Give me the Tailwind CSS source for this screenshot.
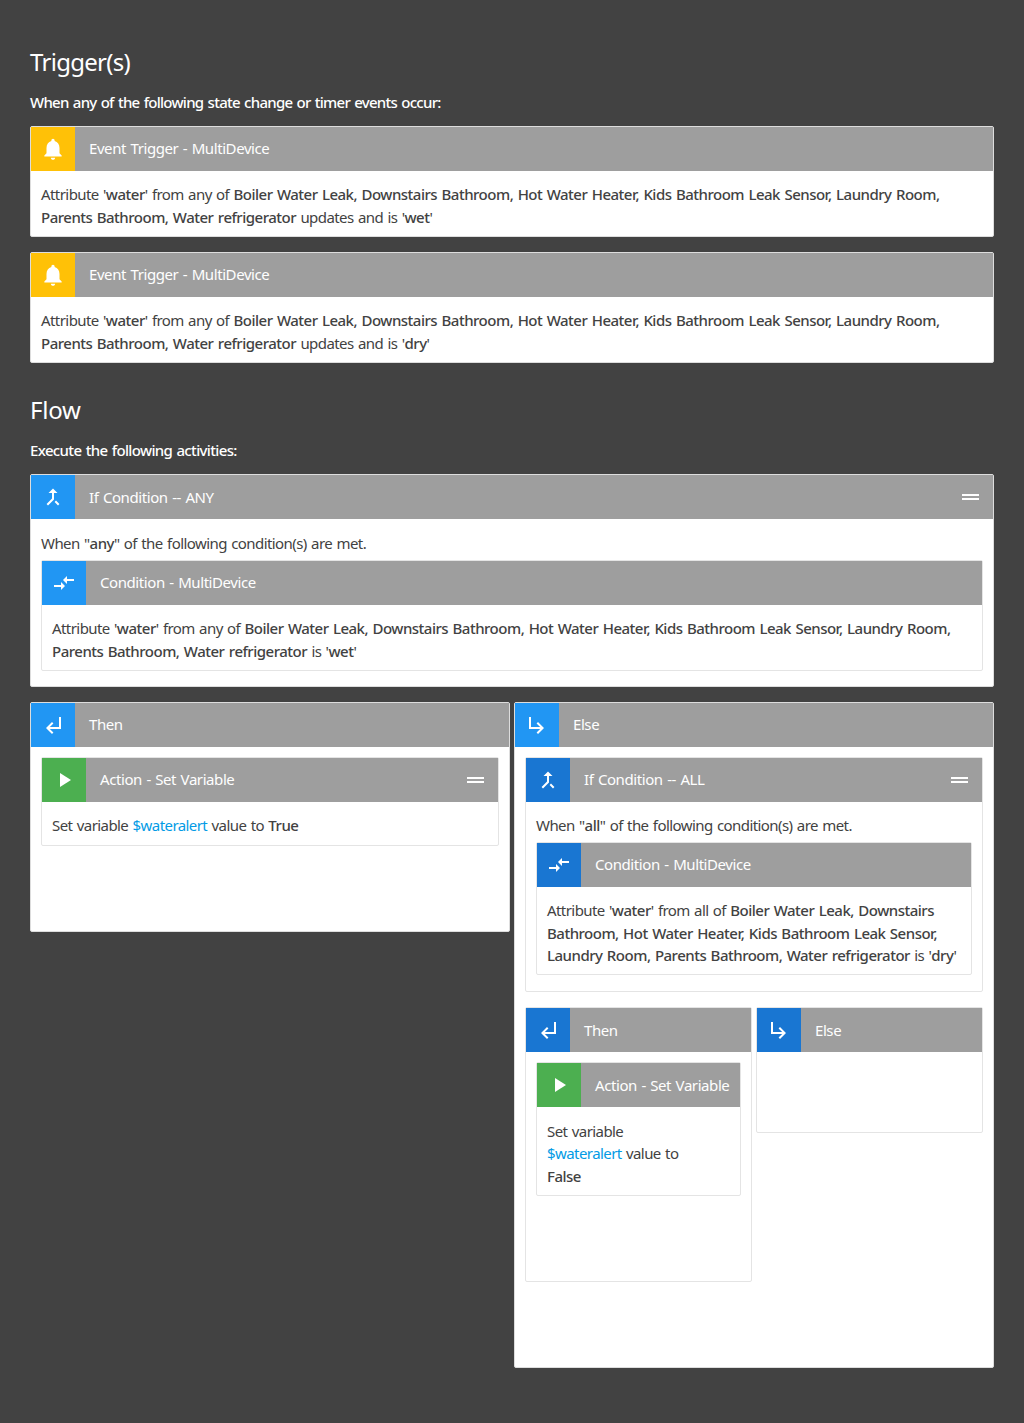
<!DOCTYPE html>
<html lang="en">
<head>
<meta charset="UTF-8">
<title>Flow</title>
<script src="https://cdn.jsdelivr.net/npm/@tailwindcss/browser@4"></script>
</head>
<body class="bg-[#424242] font-['Noto_Sans',sans-serif] text-[15px] leading-[22.5px] text-[#424242] tracking-[-0.57px] [word-spacing:1px] h-[1423px] overflow-hidden">
<div class="px-[30px] pt-[44px]">

  <!-- triggers -->
  <h2 class="text-[24px] leading-[36px] text-white tracking-[-0.7px]">Trigger(s)</h2>
  <p class="mt-[11px] mb-[12px] text-white font-medium tracking-[-0.73px]">When any of the following state change or timer events occur:</p>

  <div class="flex flex-col gap-[15px]">
    <div class="bg-white border border-[#ddd] rounded-[2px]">
      <div class="flex items-center h-[44px] bg-[#9e9e9e] text-white tracking-[-0.42px]">
        <div class="w-[44px] h-full flex items-center justify-center bg-[#ffc107]"><svg class="w-[26px] h-[26px] fill-white" viewBox="0 0 24 24"><path d="M12 22c1.1 0 2-.9 2-2h-4c0 1.1.9 2 2 2zm6-6v-5c0-3.07-1.63-5.64-4.5-6.32V4c0-.83-.67-1.5-1.5-1.5s-1.5.67-1.5 1.5v.68C7.64 5.36 6 7.92 6 11v5l-2 2v1h16v-1l-2-2z"/></svg></div>
        <span class="ml-[14px]">Event Trigger - MultiDevice</span>
      </div>
      <div class="pt-[12.5px] pb-[7.5px] px-[10px]">Attribute '<b class="font-medium tracking-[-0.5px]">water</b>' from any of <b class="font-medium tracking-[-0.5px]">Boiler Water Leak, Downstairs Bathroom, Hot Water Heater, Kids Bathroom Leak Sensor, Laundry Room, Parents Bathroom, Water refrigerator</b> updates and is '<b class="font-medium tracking-[-0.5px]">wet</b>'</div>
    </div>
    <div class="bg-white border border-[#ddd] rounded-[2px]">
      <div class="flex items-center h-[44px] bg-[#9e9e9e] text-white tracking-[-0.42px]">
        <div class="w-[44px] h-full flex items-center justify-center bg-[#ffc107]"><svg class="w-[26px] h-[26px] fill-white" viewBox="0 0 24 24"><path d="M12 22c1.1 0 2-.9 2-2h-4c0 1.1.9 2 2 2zm6-6v-5c0-3.07-1.63-5.64-4.5-6.32V4c0-.83-.67-1.5-1.5-1.5s-1.5.67-1.5 1.5v.68C7.64 5.36 6 7.92 6 11v5l-2 2v1h16v-1l-2-2z"/></svg></div>
        <span class="ml-[14px]">Event Trigger - MultiDevice</span>
      </div>
      <div class="pt-[12.5px] pb-[7.5px] px-[10px]">Attribute '<b class="font-medium tracking-[-0.5px]">water</b>' from any of <b class="font-medium tracking-[-0.5px]">Boiler Water Leak, Downstairs Bathroom, Hot Water Heater, Kids Bathroom Leak Sensor, Laundry Room, Parents Bathroom, Water refrigerator</b> updates and is '<b class="font-medium tracking-[-0.5px]">dry</b>'</div>
    </div>
  </div>

  <!-- flow -->
  <h2 class="mt-[29px] text-[24px] leading-[36px] text-white tracking-[-0.2px]">Flow</h2>
  <p class="mt-[11px] mb-[13px] text-white font-medium tracking-[-0.65px]">Execute the following activities:</p>

  <div class="bg-white border border-[#ddd] rounded-[2px]">
    <div class="flex items-center h-[44px] bg-[#9e9e9e] text-white tracking-[-0.42px]">
      <div class="w-[44px] h-full flex items-center justify-center bg-[#2196f3]"><svg class="w-[24px] h-[24px] fill-white" viewBox="0 0 24 24"><path d="M17 20.41L18.41 19 15 15.59 13.59 17 17 20.41zM7.5 8H11v5.59L5.59 19 7 20.41l6-6V8h3.5L12 3.5 7.5 8z"/></svg></div>
      <span class="ml-[14px]">If Condition -- ANY</span>
      <div class="ml-auto mr-[14px] w-[17px] flex flex-col gap-[2px]"><div class="h-[2px] bg-white"></div><div class="h-[2px] bg-white"></div></div>
    </div>
    <div class="pt-[13px] px-[10px] pb-[15px]">
      <div>When "<b class="font-medium tracking-[-0.5px]">any</b>" of the following condition(s) are met.</div>
      <div class="mt-[5px] bg-white border border-[#e4e4e4] rounded-[2px]">
        <div class="flex items-center h-[44px] bg-[#9e9e9e] text-white tracking-[-0.42px]">
          <div class="w-[44px] h-full flex items-center justify-center bg-[#2196f3]"><svg class="w-[24px] h-[24px] fill-white" viewBox="0 0 24 24"><path d="M9.01 14H2v2h7.01v3L13 15l-3.99-4v3zm5.98-1v-3H22V8h-7.01V5L11 9l3.99 4z"/></svg></div>
          <span class="ml-[14px]">Condition - MultiDevice</span>
        </div>
        <div class="pt-[12.5px] pb-[7.5px] px-[10px]">Attribute '<b class="font-medium tracking-[-0.5px]">water</b>' from any of <b class="font-medium tracking-[-0.5px]">Boiler Water Leak, Downstairs Bathroom, Hot Water Heater, Kids Bathroom Leak Sensor, Laundry Room, Parents Bathroom, Water refrigerator</b> is '<b class="font-medium tracking-[-0.5px]">wet</b>'</div>
      </div>
    </div>
  </div>

  <div class="mt-[15px] flex items-start gap-[4px]">
    <!-- then -->
    <div class="flex-1 min-w-0 bg-white border border-[#ddd] rounded-[2px]">
      <div class="flex items-center h-[44px] bg-[#9e9e9e] text-white tracking-[-0.42px]">
        <div class="w-[44px] h-full flex items-center justify-center bg-[#2196f3]"><svg class="w-[24px] h-[24px] fill-white" viewBox="0 0 24 24"><path d="M11 9l1.42 1.42L8.83 14H18V4h2v12H8.83l3.59 3.58L11 21l-6-6 6-6z"/></svg></div>
        <span class="ml-[14px]">Then</span>
      </div>
      <div class="pt-[10px] px-[10px] pb-[85px]">
        <div class="bg-white border border-[#e4e4e4] rounded-[2px]">
          <div class="flex items-center h-[44px] bg-[#9e9e9e] text-white tracking-[-0.42px]">
            <div class="w-[44px] h-full flex items-center justify-center bg-[#4caf50]"><svg class="w-[24px] h-[24px] fill-white" viewBox="0 0 24 24"><path d="M8 5v14l11-7z"/></svg></div>
            <span class="ml-[14px]">Action - Set Variable</span>
            <div class="ml-auto mr-[14px] w-[17px] flex flex-col gap-[2px]"><div class="h-[2px] bg-white"></div><div class="h-[2px] bg-white"></div></div>
          </div>
          <div class="pt-[12.5px] pb-[8px] px-[10px]">Set variable <a class="text-[#039be5]">$wateralert</a> value to <b class="font-medium tracking-[-0.5px]">True</b></div>
        </div>
      </div>
    </div>

    <!-- else -->
    <div class="flex-1 min-w-0 bg-white border border-[#ddd] rounded-[2px]">
      <div class="flex items-center h-[44px] bg-[#9e9e9e] text-white tracking-[-0.42px]">
        <div class="w-[44px] h-full flex items-center justify-center bg-[#2196f3]"><svg class="w-[24px] h-[24px] fill-white" viewBox="0 0 24 24"><path d="M19 15l-6 6-1.42-1.42L15.17 16H4V4h2v10h9.17l-3.59-3.58L13 9l6 6z"/></svg></div>
        <span class="ml-[14px]">Else</span>
      </div>
      <div class="pt-[10px] px-[10px] pb-[85px]">
        <div class="bg-white border border-[#e4e4e4] rounded-[2px]">
          <div class="flex items-center h-[44px] bg-[#9e9e9e] text-white tracking-[-0.42px]">
            <div class="w-[44px] h-full flex items-center justify-center bg-[#1976d2]"><svg class="w-[24px] h-[24px] fill-white" viewBox="0 0 24 24"><path d="M17 20.41L18.41 19 15 15.59 13.59 17 17 20.41zM7.5 8H11v5.59L5.59 19 7 20.41l6-6V8h3.5L12 3.5 7.5 8z"/></svg></div>
            <span class="ml-[14px]">If Condition -- ALL</span>
            <div class="ml-auto mr-[14px] w-[17px] flex flex-col gap-[2px]"><div class="h-[2px] bg-white"></div><div class="h-[2px] bg-white"></div></div>
          </div>
          <div class="pt-[12.5px] px-[10px] pb-[16px]">
            <div>When "<b class="font-medium tracking-[-0.5px]">all</b>" of the following condition(s) are met.</div>
            <div class="mt-[5px] bg-white border border-[#e4e4e4] rounded-[2px]">
              <div class="flex items-center h-[44px] bg-[#9e9e9e] text-white tracking-[-0.42px]">
                <div class="w-[44px] h-full flex items-center justify-center bg-[#1976d2]"><svg class="w-[24px] h-[24px] fill-white" viewBox="0 0 24 24"><path d="M9.01 14H2v2h7.01v3L13 15l-3.99-4v3zm5.98-1v-3H22V8h-7.01V5L11 9l3.99 4z"/></svg></div>
                <span class="ml-[14px]">Condition - MultiDevice</span>
              </div>
              <div class="pt-[12.5px] pb-[7.5px] px-[10px]">Attribute '<b class="font-medium tracking-[-0.5px]">water</b>' from all of <b class="font-medium tracking-[-0.5px]">Boiler Water Leak, Downstairs Bathroom, Hot Water Heater, Kids Bathroom Leak Sensor, Laundry Room, Parents Bathroom, Water refrigerator</b> is '<b class="font-medium tracking-[-0.5px]">dry</b>'</div>
            </div>
          </div>
        </div>

        <div class="mt-[15px] flex items-start gap-[4px]">
          <div class="flex-1 min-w-0 bg-white border border-[#e4e4e4] rounded-[2px]">
            <div class="flex items-center h-[44px] bg-[#9e9e9e] text-white tracking-[-0.42px]">
              <div class="w-[44px] h-full flex items-center justify-center bg-[#1976d2]"><svg class="w-[24px] h-[24px] fill-white" viewBox="0 0 24 24"><path d="M11 9l1.42 1.42L8.83 14H18V4h2v12H8.83l3.59 3.58L11 21l-6-6 6-6z"/></svg></div>
              <span class="ml-[14px]">Then</span>
            </div>
            <div class="pt-[10px] px-[10px] pb-[85px]">
              <div class="bg-white border border-[#e4e4e4] rounded-[2px]">
                <div class="flex items-center h-[44px] bg-[#9e9e9e] text-white tracking-[-0.42px]">
                  <div class="w-[44px] h-full flex items-center justify-center bg-[#4caf50]"><svg class="w-[24px] h-[24px] fill-white" viewBox="0 0 24 24"><path d="M8 5v14l11-7z"/></svg></div>
                  <span class="ml-[14px] whitespace-nowrap">Action - Set Variable</span>
                </div>
                <div class="pt-[12.5px] pb-[8px] px-[10px]">Set variable<br><a class="text-[#039be5]">$wateralert</a> value to<br><b class="font-medium tracking-[-0.5px]">False</b></div>
              </div>
            </div>
          </div>
          <div class="flex-1 min-w-0 bg-white border border-[#e4e4e4] rounded-[2px]">
            <div class="flex items-center h-[44px] bg-[#9e9e9e] text-white tracking-[-0.42px]">
              <div class="w-[44px] h-full flex items-center justify-center bg-[#1976d2]"><svg class="w-[24px] h-[24px] fill-white" viewBox="0 0 24 24"><path d="M19 15l-6 6-1.42-1.42L15.17 16H4V4h2v10h9.17l-3.59-3.58L13 9l6 6z"/></svg></div>
              <span class="ml-[14px]">Else</span>
            </div>
            <div class="h-[80px]"></div>
          </div>
        </div>
      </div>
    </div>
  </div>
</div>
</body>
</html>
